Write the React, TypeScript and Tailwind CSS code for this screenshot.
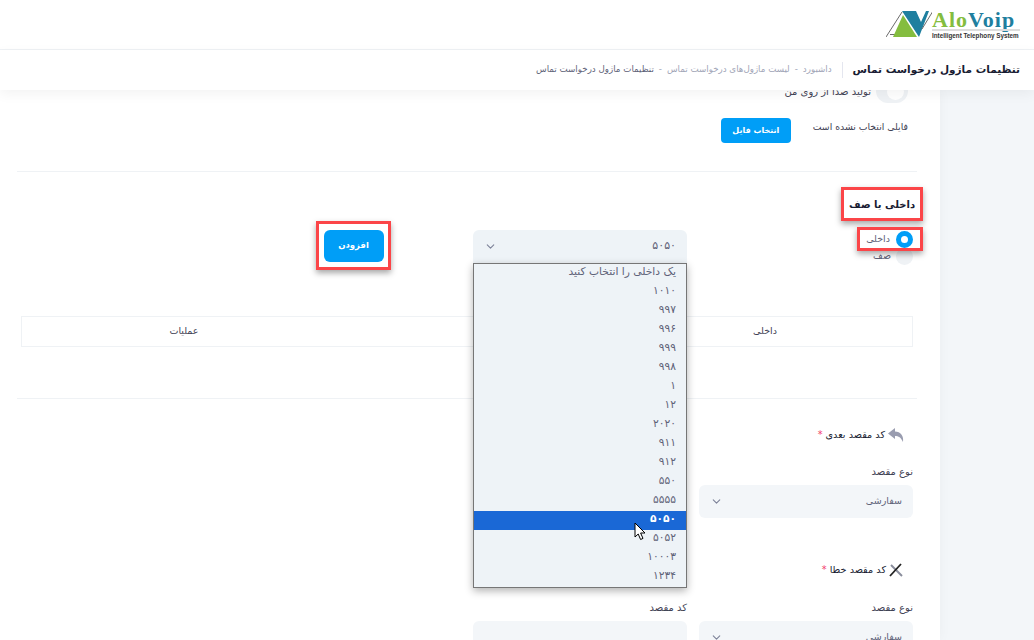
import React from "react";
import { ChevronDown } from "lucide-react";

const options = ["یک داخلی را انتخاب کنید", "۱۰۱۰", "۹۹۷", "۹۹۶", "۹۹۹", "۹۹۸", "۱", "۱۲", "۲۰۲۰", "۹۱۱", "۹۱۲", "۵۵۰", "۵۵۵۵", "۵۰۵۰", "۵۰۵۲", "۱۰۰۰۳", "۱۲۳۴"];

const Logo = () => (
  <div className="flex items-start" dir="ltr">
    <svg width="46" height="30" viewBox="0 0 46 30" className="shrink-0">
      <path d="M0 27 L16 2" stroke="#6b6b6b" strokeWidth="1" fill="none" />
      <path d="M4 24.5 H20" stroke="#6b6b6b" strokeWidth="1" fill="none" />
      <path d="M16 1 H30 L35 12 L40 1 H43 L33 27 Z" fill="#1f7f9f" />
      <path d="M7 27 L17 5 L31 27 Z" fill="#84bd3f" />
      <path d="M47 1 L36 19" stroke="#6b6b6b" strokeWidth="1" fill="none" />
    </svg>
    <div className="flex flex-col w-[88px]">
      <div className="h-[19px] text-[22px] leading-[19px] font-bold tracking-[1px] whitespace-nowrap font-['Liberation_Serif',serif]">
        <span className="text-[#84bd3f]">Alo</span>
        <span className="text-[#1f7f9f]">Voip</span>
      </div>
      <div className="h-[2px] bg-[#dddddd]"></div>
      <div className="text-[6.3px] leading-[9px] font-bold text-[#333333] whitespace-nowrap font-['Liberation_Sans',sans-serif]">Intelligent Telephony System</div>
    </div>
  </div>
);

const FieldSelect = ({ label, value }: { label: string; value?: string }) => (
  <div className="w-[214px]">
    <div className="text-[10px] leading-[16px] text-[#3f4254] mb-[5px]">{label}</div>
    <div className="h-[33px] rounded-md bg-[#f3f6f9] flex items-center justify-between px-[11px] text-[9.5px] text-[#5e6278]">
      <span>{value}</span>
      {value && <ChevronDown size={13} className="text-[#7e8299]" />}
    </div>
  </div>
);

export default function App() {
  return (
    <div dir="rtl" className="relative w-[1034px] h-[640px] overflow-hidden bg-white font-['DejaVu_Sans','Noto_Sans',sans-serif]">
      <header className="h-[50px] border-b border-[#eff2f5] flex items-center justify-start pr-[14px]">
        <Logo />
      </header>
      <div className="h-[40px] flex items-center pr-[14px] bg-white shadow-[0_4px_12px_rgba(0,0,0,0.05)] relative z-10">
        <h1 className="text-[10.5px] font-bold tracking-[-0.2px] text-[#181c32] whitespace-nowrap">تنظیمات ماژول درخواست تماس</h1>
        <div className="w-px h-[16px] bg-[#e4e6ef] mx-[10px]"></div>
        <div className="flex items-center gap-[5px] text-[8.7px] text-[#a1a5b7] whitespace-nowrap">
          <span>داشبورد</span><span>-</span><span>لیست ماژول‌های درخواست تماس</span><span>-</span><span className="text-[#5e6278]">تنظیمات ماژول درخواست تماس</span>
        </div>
      </div>

      <div className="flex h-[550px]">
        <aside className="w-[94px] shrink-0 bg-[#f3f6f9]"></aside>
        <main className="flex-1 bg-white shadow-[0_0_12px_rgba(0,0,0,0.04)] pr-[23px] pl-[17px]">
          <div className="flex items-center gap-[5px] h-[6px] pr-[9px] -mt-[2px]">
            <div className="w-[32px] h-[24px] rounded-full bg-[#eff2f5] shrink-0 flex items-center"><div className="w-[17px] h-[17px] rounded-full bg-white mr-[4px]"></div></div>
            <span className="text-[10px] text-[#3f4254] whitespace-nowrap">تولید صدا از روی من</span>
          </div>
          <div className="flex items-center gap-[22px] mt-[24px] pr-[9px]">
            <span className="text-[9.3px] text-[#3f4254] mb-[7px]">فایلی انتخاب نشده است</span>
            <button className="w-[70px] h-[25px] rounded bg-[#009ef7] text-white text-[8px] font-bold">انتخاب فایل</button>
          </div>
          <div className="border-t border-[#eff2f5] mt-[28px]"></div>

          <div className="flex mt-[15px] -mr-[6px]">
            <div className="w-[82px] shrink-0">
              <div className="w-[82px] h-[34px] border-[3px] border-[#fb4548] shadow-[0_3px_6px_rgba(0,0,0,0.35)] flex items-center justify-center text-[10px] font-bold text-[#181c32] whitespace-nowrap">داخلی یا صف</div>
              <div className="relative z-[1] w-[66px] h-[24px] mt-[6px] border-[3px] border-[#fb4548] shadow-[0_3px_6px_rgba(0,0,0,0.35)] flex items-center gap-[6px] pr-[7px] text-[9.5px] text-[#5e6278]">
                <span className="w-[17px] h-[17px] rounded-full border-[5px] border-[#009ef7] bg-white shrink-0"></span>
                <span>داخلی</span>
              </div>
              <div className="flex items-center gap-[5px] pr-[10px] text-[9.5px] text-[#5e6278] -mt-[3px]">
                <span className="w-[17px] h-[17px] rounded-full bg-[#eff2f5] shrink-0"></span>
                <span>صف</span>
              </div>
            </div>

            <div className="relative z-[2] mr-[154px] mt-[43px] w-[214px] h-[33px] shrink-0">
              <div className="h-[33px] rounded-t-md bg-[#eef3f7] flex items-center justify-between px-[11px] text-[11px] text-[#5e6278]">
                <span>۵۰۵۰</span>
                <ChevronDown size={13} className="text-[#7e8299]" />
              </div>
              <ul className="absolute top-[33px] right-0 w-[214px] h-[325px] border border-[#767676] bg-[#eef3f7] shadow-[0_3px_8px_rgba(0,0,0,0.3)] overflow-hidden text-[10.7px] text-[#5e6278]">
                {options.map((o, i) => (
                  <li key={o} className={i === 13 ? "h-[19px] leading-[16px] pr-[10px] bg-[#1a68d6] text-white font-bold" : "h-[19px] leading-[15px] pr-[10px]"}>{o}</li>
                ))}
              </ul>
              <svg width="12" height="19" viewBox="0 0 12 19" className="absolute left-[161px] top-[292px]">
                <path d="M1 1 V15 L4.2 12 L6.6 17.5 L9 16.4 L6.6 11 H11 Z" fill="#fff" stroke="#000" strokeWidth="1" />
              </svg>
            </div>

            <div className="mr-[82px] mt-[34px]">
              <div className="w-[75px] h-[49px] border-[3px] border-[#fb4548] shadow-[0_3px_6px_rgba(0,0,0,0.35)] flex items-center justify-center">
                <button className="w-[60px] h-[32px] rounded-md bg-[#009ef7] text-white text-[8.5px] font-bold">افزودن</button>
              </div>
            </div>
          </div>

          <div className="mt-[46px] mx-[4px] h-[31px] border border-[#eff2f5] grid grid-cols-[294px_272px_1fr] items-center text-[9.5px] text-[#3f4254]">
            <span className="text-center">داخلی</span>
            <span></span>
            <span className="text-center">عملیات</span>
          </div>
          <div className="border-t border-[#eff2f5] mt-[51px]"></div>

          <div className="flex items-center gap-[3px] mt-[28px] pr-[13px] h-[16px] text-[9.7px] text-[#181c32]">
            <svg width="16" height="14" viewBox="0 0 16 14" className="shrink-0"><path d="M7 0 L0 5.5 L7 11 V8 C10.5 8 13 9.5 15 14 C16 8 12.5 3.5 7 3.5 Z" fill="#9a9db0" /></svg>
            <span>کد مقصد بعدی</span><span className="text-[#f1416c]">*</span>
          </div>
          <div className="mt-[21px] mr-[4px]"><FieldSelect label="نوع مقصد" value="سفارشی" /></div>

          <div className="flex items-center gap-[3px] mt-[44px] pr-[14px] h-[16px] text-[9.7px] text-[#181c32]">
            <svg width="14" height="14" viewBox="0 0 14 14" className="shrink-0"><path d="M2 2 L13 13" stroke="#8a8d9c" strokeWidth="2" /><path d="M1 13 L12 1" stroke="#222" strokeWidth="1.8" /></svg>
            <span>کد مقصد خطا</span><span className="text-[#f1416c]">*</span>
          </div>
          <div className="flex gap-[12px] mt-[22px] mr-[4px]">
            <FieldSelect label="نوع مقصد" value="سفارشی" />
            <FieldSelect label="کد مقصد" />
          </div>
        </main>
      </div>
    </div>
  );
}
